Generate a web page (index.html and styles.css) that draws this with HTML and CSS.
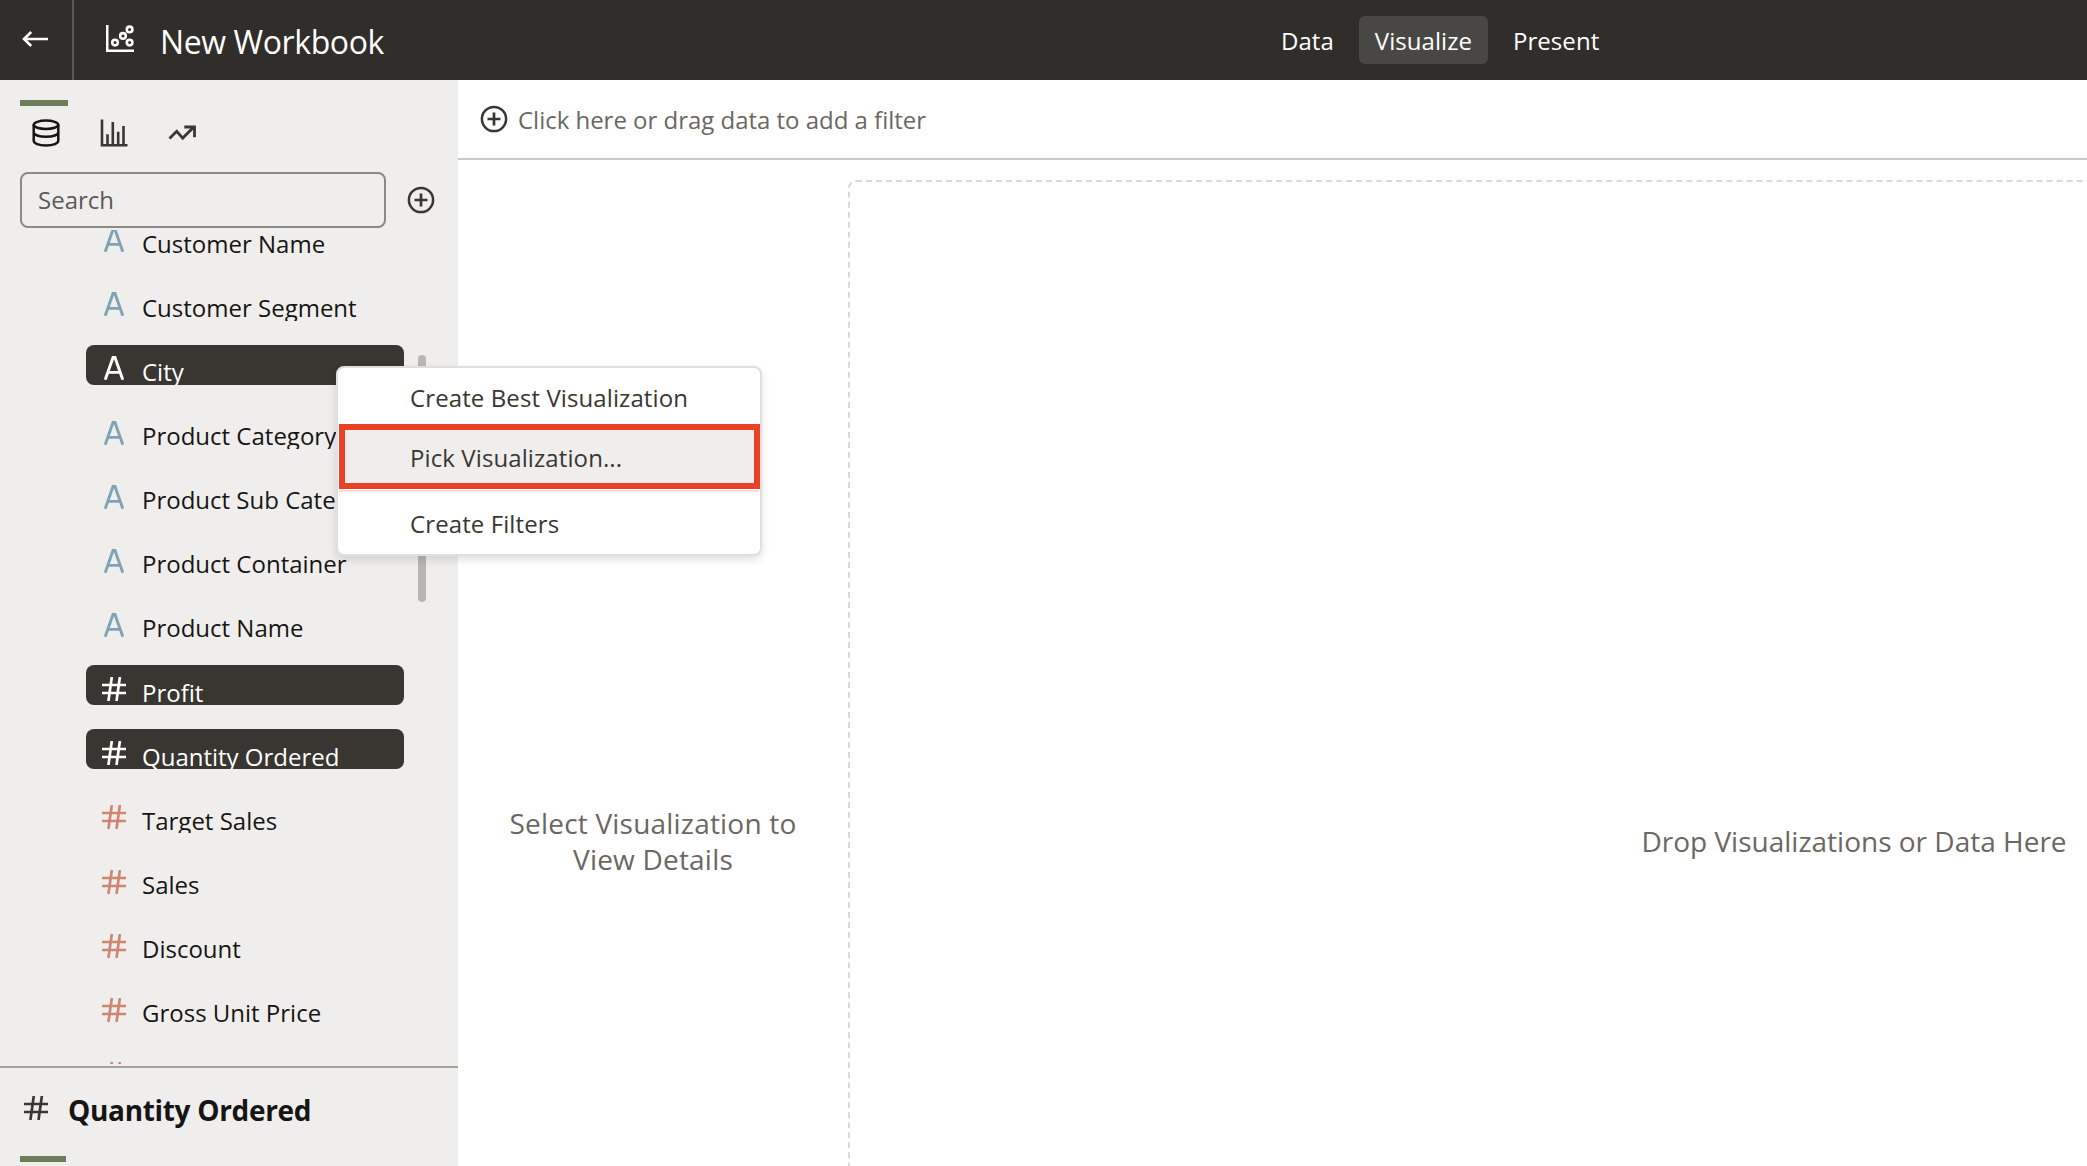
FILE: index.html
```html
<!DOCTYPE html>
<html lang="en">
<head>
<meta charset="utf-8">
<title>New Workbook</title>
<link rel="stylesheet" href="styles.css">
</head>
<body>
<svg width="0" height="0" class="sprite" aria-hidden="true">
  <symbol id="attr" viewBox="0 0 24 24"><path d="M3.200 23.800 11.100 1.200h1.800L20.800 23.800M6.300 16.400h11.400" fill="none" stroke="currentColor" stroke-width="2.900"/></symbol>
  <symbol id="num" viewBox="0 0 24 24"><path d="M9.800 0 6.400 24M17.900 0 14.500 24M0 8h24M0 16h24" fill="none" stroke="currentColor" stroke-width="2.700"/></symbol>
  <symbol id="add" viewBox="0 0 28 28"><path d="M14 7.500v13M7.500 14h13" fill="none" stroke="currentColor" stroke-width="2.700"/><circle cx="14" cy="14" r="12.100" fill="none" stroke="currentColor" stroke-width="2.500"/></symbol>
</svg>
<header class="topbar">
  <button class="back" aria-label="Back">
    <svg width="26" height="16" viewBox="0 0 26 16"><path d="M26 8H2M9.200 1 2 8l7.200 7" fill="none" stroke="currentColor" stroke-width="2.600"/></svg>
  </button>
  <svg class="logo" width="28" height="28" viewBox="0 0 28 28" fill="none" stroke="currentColor" stroke-width="2.600"><path d="M1.200 0v25.800H28"/><circle cx="9" cy="17.600" r="2.800"/><circle cx="17" cy="10.900" r="2.800"/><circle cx="23.600" cy="4.400" r="2.800"/><circle cx="23.600" cy="17.600" r="2.800"/></svg>
  <h1 class="title">New Workbook</h1>
  <nav class="modes">
    <a class="mode">Data</a>
    <a class="mode active">Visualize</a>
    <a class="mode">Present</a>
  </nav>
</header>
<div class="workspace">
  <aside class="sidebar">
    <div class="marker"></div>
    <div class="tabs">
      <svg width="28" height="28" viewBox="0 0 28 28" fill="none" stroke="#161513" stroke-width="2.500"><ellipse cx="14" cy="5.800" rx="12.300" ry="4.200"/><path d="M1.700 5.800v16c0 2.600 5 4.600 12.300 4.600s12.300-2 12.300-4.600v-16M1.700 13.300c0 2.500 5 4.500 12.300 4.500s12.300-2 12.300-4.500"/></svg>
      <svg width="28" height="28" viewBox="0 0 28 28" fill="none" stroke="#3a3631" stroke-width="2.600"><path d="M2 .500v25.800h25.500M7.500 26V15.300M12.800 26V3M18.200 26V12.700M23.500 26V7"/></svg>
      <svg width="28" height="28" viewBox="0 0 28 28" fill="none" stroke="#3a3631" stroke-width="2.800"><path d="M1.500 19.500 8.700 12.300l6 6.800L25.800 8M16.300 8h10.200v10.300"/></svg>
    </div>
    <div class="searchrow">
      <div class="search">Search</div>
      <svg class="plus" width="28" height="28"><use href="#add"/></svg>
    </div>
    <div class="listwrap">
      <ul class="list">
        <li class="row attr"><svg class="glyph"><use href="#attr"/></svg><span>Customer Name</span></li>
        <li class="row attr"><svg class="glyph"><use href="#attr"/></svg><span>Customer Segment</span></li>
        <li class="row attr selected"><svg class="glyph"><use href="#attr"/></svg><span>City</span></li>
        <li class="row attr"><svg class="glyph"><use href="#attr"/></svg><span>Product Category</span></li>
        <li class="row attr"><svg class="glyph"><use href="#attr"/></svg><span>Product Sub Category</span></li>
        <li class="row attr"><svg class="glyph"><use href="#attr"/></svg><span>Product Container</span></li>
        <li class="row attr"><svg class="glyph"><use href="#attr"/></svg><span>Product Name</span></li>
        <li class="row num selected"><svg class="glyph"><use href="#num"/></svg><span>Profit</span></li>
        <li class="row num selected"><svg class="glyph"><use href="#num"/></svg><span>Quantity Ordered</span></li>
        <li class="row num"><svg class="glyph"><use href="#num"/></svg><span>Target Sales</span></li>
        <li class="row num"><svg class="glyph"><use href="#num"/></svg><span>Sales</span></li>
        <li class="row num"><svg class="glyph"><use href="#num"/></svg><span>Discount</span></li>
        <li class="row num"><svg class="glyph"><use href="#num"/></svg><span>Gross Unit Price</span></li>
        <li class="row num"><svg class="glyph"><use href="#num"/></svg></li>
      </ul>
      <div class="scrollbar"></div>
    </div>
    <section class="details">
      <div class="detailhead"><svg class="hash" width="24" height="24"><use href="#num"/></svg><h2>Quantity Ordered</h2></div>
      <div class="marker small"></div>
    </section>
  </aside>
  <main class="main">
    <div class="filterbar">
      <svg width="28" height="28"><use href="#add"/></svg>
      <span>Click here or drag data to add a filter</span>
    </div>
    <div class="stage">
      <div class="grammar">Select Visualization to<br>View Details</div>
      <div class="canvas">Drop Visualizations or Data Here</div>
    </div>
  </main>
</div>
<div class="menu">
  <div class="item best">Create Best Visualization</div>
  <div class="item pick">Pick Visualization...</div>
  <div class="separator"></div>
  <div class="item filters">Create Filters</div>
</div>
</body>
</html>
```
FILE: styles.css
```css
* { box-sizing: border-box; }
body {
  margin: 0;
  width: 2087px;
  height: 1166px;
  overflow: hidden;
  position: relative;
  background: #fff;
  color: #161513;
  font: 24px/40px "Open Sans", "Noto Sans", sans-serif;
  display: flex;
  flex-direction: column;
}
svg { display: block; flex: none; }
.sprite { position: absolute; }
h1, h2, ul { margin: 0; padding: 0; font-weight: 400; }

.topbar { flex: none; height: 80px; background: #312d2a; color: #fff; display: flex; align-items: flex-start; }
.back { width: 74px; height: 80px; padding: 0 0 2px 22px; border: 0; border-right: 2px solid #5b5754; background: none; color: #fff; }
.logo { margin: 25px 0 0 32px; }
.title { width: 1131px; padding-left: 26px; font-size: 32px; line-height: 83px; letter-spacing: -.4px; }
.modes { display: flex; gap: 9px; padding-top: 16px; }
.mode { height: 48px; padding: 0 16px; line-height: 50px; border-radius: 6px; letter-spacing: .05px; }
.mode.active { background: #484743; }

.workspace { flex: 1; min-height: 0; display: flex; }
.sidebar { width: 458px; flex: none; background: #f0eeed; display: flex; flex-direction: column; }
.marker { flex: none; width: 48px; height: 6px; margin: 20px 0 0 20px; background: #6a7f59; }
.marker.small { width: 46px; margin-top: 0; }
.tabs { display: flex; gap: 40px; padding: 13px 0 0 32px; height: 66px; flex: none; }
.searchrow { display: flex; gap: 21px; padding-left: 20px; flex: none; }
.search { width: 366px; height: 56px; border: 2px solid #8b8885; border-radius: 8px; padding-left: 16px; line-height: 52px; color: #5d5955; }
.plus { margin-top: 14px; color: #3a3631; }
.listwrap { flex: none; height: 838px; display: flex; overflow: hidden; padding-top: 2px; }
.list { width: 318px; height: 834px; margin-left: 86px; overflow: hidden; list-style: none; flex: none; }
.row { display: flex; gap: 16px; height: 40px; margin-bottom: 24px; padding-left: 16px; border-radius: 8px; overflow: hidden; white-space: nowrap; }
.row:first-child { margin-top: -13px; }
.row span { padding-top: 7px; }
.row.num span { padding-top: 8px; }
.glyph { width: 24px; height: 24px; margin-top: 12px; }
.row:nth-child(-n+3) .glyph { margin-top: 11px; }
.row:nth-child(n+11) .glyph { margin-top: 13px; }
.attr .glyph { color: #7ca4b4; }
.num .glyph { color: #cf8571; }
.row.selected { background: #393530; color: #fff; }
.selected .glyph { color: #fff; }
.scrollbar { width: 8px; height: 247px; margin: 125px 0 0 14px; border-radius: 4px; background: #b9b5b1; }
.details { flex: 1; border-top: 2px solid #a5a29e; overflow: hidden; }
.detailhead { display: flex; gap: 20px; height: 88px; padding-left: 24px; }
.hash { margin-top: 28px; color: #3a3631; }
.detailhead h2 { font-size: 28px; font-weight: 700; line-height: 85px; letter-spacing: -.32px; white-space: nowrap; }

.main { flex: 1; min-width: 0; display: flex; flex-direction: column; }
.filterbar { flex: none; height: 80px; border-bottom: 2px solid #cbc9c7; display: flex; gap: 10px; padding: 25px 0 0 22px; color: #3a3631; }
.filterbar span { line-height: 30px; letter-spacing: -.02px; color: #6b6762; }
.stage { flex: 1; min-height: 0; display: flex; overflow: hidden; color: #6b6762; font-size: 28px; line-height: 36px; text-align: center; }
.grammar { width: 390px; flex: none; padding-top: 645px; white-space: nowrap; letter-spacing: .2px; }
.canvas { width: 2012px; height: 1340px; flex: none; margin-top: 20px; padding-top: 641px; border: 2px dashed #dbd9d7; border-radius: 8px; }

.menu { position: absolute; left: 336px; top: 366px; width: 426px; height: 190px; border: 2px solid #e1dfdd; border-radius: 8px; background: #fff; box-shadow: 0 4px 8px rgba(0,0,0,.12); color: #3a3631; }
.item { padding-left: 72px; letter-spacing: .1px; }
.best { height: 56px; line-height: 60px; }
.pick { height: 65px; margin: 0 0 0 1px; padding-left: 65px; border: 6px solid #eb4028; background: #f0eeed; line-height: 55px; }
.separator { height: 2px; margin: 1px 1px 1px; background: #f3e0da; }
.filters { line-height: 61px; }
```
